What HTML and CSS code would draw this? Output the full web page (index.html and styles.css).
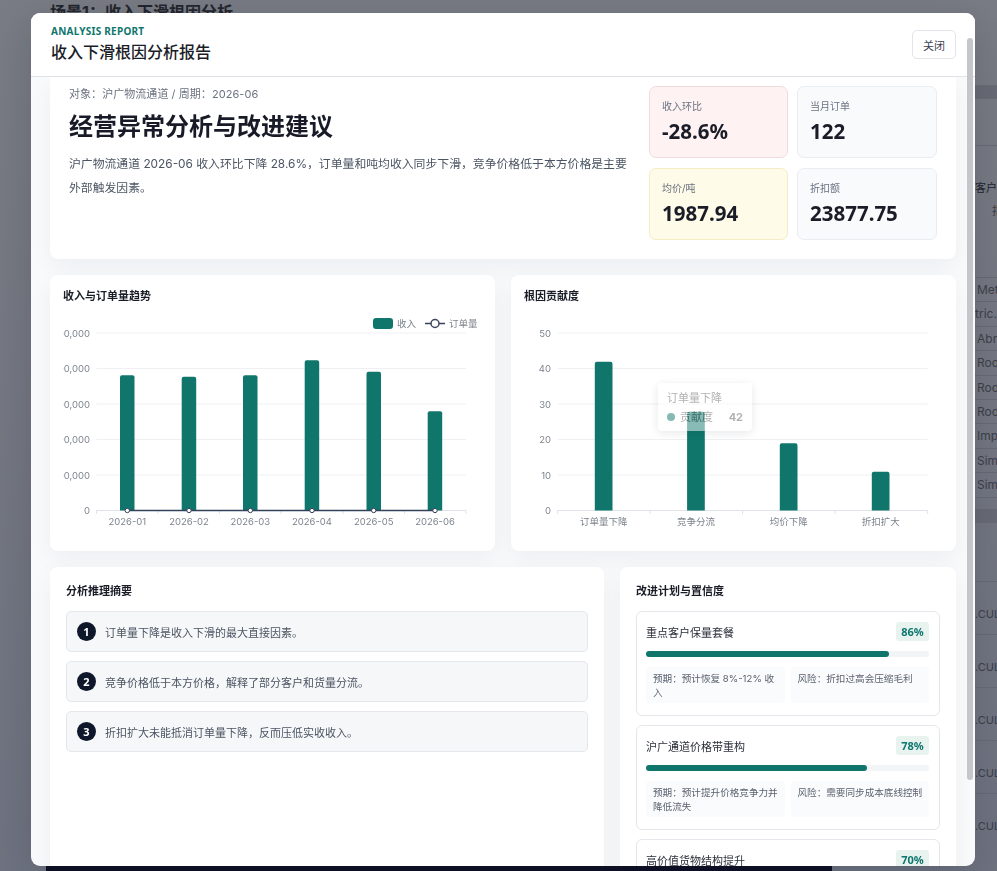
FILE: index.html
```html
<!DOCTYPE html>
<html lang="zh-CN">
<head>
    <meta charset="UTF-8">
    <meta name="viewport" content="width=device-width, initial-scale=1.0">
    <title>收入下滑根因分析报告</title>
    <link rel="stylesheet" href="styles.css">
</head>
<body>
    <!-- dimmed page behind the dialog -->
    <div class="page">
        <h1 class="page-title">场景1：收入下滑根因分析</h1>
        <div class="page-band"></div>
        <div class="page-line"></div>
        <div class="page-label">客户</div>
        <div class="page-tag">指</div>
        <div class="page-table">
            <div class="page-row">Metr</div>
            <div class="page-row cut">tric.S</div>
            <div class="page-row">Abno</div>
            <div class="page-row">Root</div>
            <div class="page-row">Root</div>
            <div class="page-row">Root</div>
            <div class="page-row">Impr</div>
            <div class="page-row">Simu</div>
            <div class="page-row">Simu</div>
        </div>
        <div class="page-band low"></div>
        <div class="page-calc">
            <div class="calc-row">.CUL</div>
            <div class="calc-row">.CUL</div>
            <div class="calc-row">.CUL</div>
            <div class="calc-row">.CUL</div>
            <div class="calc-row">.CUL</div>
        </div>
        <div class="page-footer"></div>
    </div>

    <div class="overlay">
        <div class="report">
            <div class="report-header">
                <div>
                    <div class="eyebrow">ANALYSIS REPORT</div>
                    <div class="report-title">收入下滑根因分析报告</div>
                </div>
                <button class="close-btn">关闭</button>
            </div>

            <div class="report-body">
                <section class="card hero">
                    <div class="hero-text">
                        <div class="hero-meta">对象：沪广物流通道 / 周期：2026-06</div>
                        <h2>经营异常分析与改进建议</h2>
                        <p>沪广物流通道 2026-06 收入环比下降 28.6%，订单量和吨均收入同步下滑，竞争价格低于本方价格是主要外部触发因素。</p>
                    </div>
                    <div class="stats">
                        <div class="stat danger">
                            <div class="stat-label">收入环比</div>
                            <div class="stat-value">-28.6%</div>
                        </div>
                        <div class="stat">
                            <div class="stat-label">当月订单</div>
                            <div class="stat-value">122</div>
                        </div>
                        <div class="stat warn">
                            <div class="stat-label">均价/吨</div>
                            <div class="stat-value">1987.94</div>
                        </div>
                        <div class="stat">
                            <div class="stat-label">折扣额</div>
                            <div class="stat-value">23877.75</div>
                        </div>
                    </div>
                </section>

                <div class="chart-row">
                    <section class="card chart-card">
                        <div class="chart-title">收入与订单量趋势</div>
                        <div class="chart">
                            <svg width="419" height="224" viewBox="0 0 419 224">
                                <g class="grid">
                                    <path d="M33.5 22H403M33.5 57.5H403M33.5 93H403M33.5 128.5H403M33.5 164H403"/>
                                </g>
                                <path class="axis" d="M33.5 199.5H403M33.5 199.5v3.5M95 199.5v3.5M156.5 199.5v3.5M218 199.5v3.5M280 199.5v3.5M341.5 199.5v3.5M403 199.5v3.5"/>
                                <g class="labels end">
                                    <text x="27" y="25.5">500,000</text>
                                    <text x="27" y="61">400,000</text>
                                    <text x="27" y="96.5">300,000</text>
                                    <text x="27" y="132">200,000</text>
                                    <text x="27" y="167.5">100,000</text>
                                    <text x="27" y="203">0</text>
                                </g>
                                <g class="bars">
                                    <path d="M57 199.5V66.3a2 2 0 0 1 2-2h10.5a2 2 0 0 1 2 2V199.5Z"/>
                                    <path d="M118.7 199.5V67.7a2 2 0 0 1 2-2h10.5a2 2 0 0 1 2 2V199.5Z"/>
                                    <path d="M180 199.5V66.3a2 2 0 0 1 2-2h10.5a2 2 0 0 1 2 2V199.5Z"/>
                                    <path d="M241.7 199.5V51.3a2 2 0 0 1 2-2h10.5a2 2 0 0 1 2 2V199.5Z"/>
                                    <path d="M303.5 199.5V62.7a2 2 0 0 1 2-2h10.5a2 2 0 0 1 2 2V199.5Z"/>
                                    <path d="M364.7 199.5V102.3a2 2 0 0 1 2-2h10.5a2 2 0 0 1 2 2V199.5Z"/>
                                </g>
                                <path class="line" d="M64.3 199.5H372"/>
                                <g class="dots">
                                    <circle cx="64.3" cy="199.5" r="2.2"/>
                                    <circle cx="126" cy="199.5" r="2.2"/>
                                    <circle cx="187.3" cy="199.5" r="2.2"/>
                                    <circle cx="249" cy="199.5" r="2.2"/>
                                    <circle cx="310.7" cy="199.5" r="2.2"/>
                                    <circle cx="372" cy="199.5" r="2.2"/>
                                </g>
                                <g class="labels middle">
                                    <text x="64.3" y="213.5">2026-01</text>
                                    <text x="126" y="213.5">2026-02</text>
                                    <text x="187.3" y="213.5">2026-03</text>
                                    <text x="249" y="213.5">2026-04</text>
                                    <text x="310.7" y="213.5">2026-05</text>
                                    <text x="372" y="213.5">2026-06</text>
                                </g>
                                <rect class="legend-bar" x="310" y="7" width="20" height="11" rx="3"/>
                                <text class="labels" x="334" y="16">收入</text>
                                <path class="line" d="M362 12.5H382"/>
                                <circle class="legend-dot" cx="372" cy="12.5" r="4"/>
                                <text class="labels" x="386" y="16">订单量</text>
                            </svg>
                        </div>
                    </section>

                    <section class="card chart-card">
                        <div class="chart-title">根因贡献度</div>
                        <div class="chart">
                            <svg width="419" height="224" viewBox="0 0 419 224">
                                <g class="grid">
                                    <path d="M33.7 22H403.7M33.7 57.5H403.7M33.7 93H403.7M33.7 128.5H403.7M33.7 164H403.7"/>
                                </g>
                                <path class="axis" d="M33.7 199.5H403.7M33.7 199.5v3.5M126 199.5v3.5M218.5 199.5v3.5M311 199.5v3.5M403.7 199.5v3.5"/>
                                <g class="labels end">
                                    <text x="27" y="25.5">50</text>
                                    <text x="27" y="61">40</text>
                                    <text x="27" y="96.5">30</text>
                                    <text x="27" y="132">20</text>
                                    <text x="27" y="167.5">10</text>
                                    <text x="27" y="203">0</text>
                                </g>
                                <g class="bars">
                                    <path d="M70.8 199.5V52.7a2 2 0 0 1 2-2h13.7a2 2 0 0 1 2 2V199.5Z"/>
                                    <path d="M163.1 199.5V102.7a2 2 0 0 1 2-2h13.7a2 2 0 0 1 2 2V199.5Z"/>
                                    <path d="M255.8 199.5V134.3a2 2 0 0 1 2-2h13.7a2 2 0 0 1 2 2V199.5Z"/>
                                    <path d="M347.8 199.5V162.7a2 2 0 0 1 2-2h13.7a2 2 0 0 1 2 2V199.5Z"/>
                                </g>
                                <g class="labels middle">
                                    <text x="79.7" y="213.5">订单量下降</text>
                                    <text x="172" y="213.5">竞争分流</text>
                                    <text x="264.7" y="213.5">均价下降</text>
                                    <text x="356.7" y="213.5">折扣扩大</text>
                                </g>
                            </svg>
                            <div class="tooltip">
                                <div class="tooltip-title">订单量下降</div>
                                <div class="tooltip-row">
                                    <span class="tooltip-dot"></span>
                                    <span>贡献度</span>
                                    <b>42</b>
                                </div>
                            </div>
                        </div>
                    </section>
                </div>

                <div class="detail-row">
                    <section class="card detail-card">
                        <div class="section-title">分析推理摘要</div>
                        <div class="reason-list">
                            <div class="reason"><span class="reason-no">1</span>订单量下降是收入下滑的最大直接因素。</div>
                            <div class="reason"><span class="reason-no">2</span>竞争价格低于本方价格，解释了部分客户和货量分流。</div>
                            <div class="reason"><span class="reason-no">3</span>折扣扩大未能抵消订单量下降，反而压低实收收入。</div>
                        </div>
                    </section>

                    <section class="card detail-card">
                        <div class="section-title">改进计划与置信度</div>
                        <div class="plan-list">
                            <div class="plan">
                                <div class="plan-head">
                                    <span>重点客户保量套餐</span>
                                    <span class="badge">86%</span>
                                </div>
                                <div class="progress"><div class="progress-fill" style="width: 86%"></div></div>
                                <div class="plan-notes">
                                    <div>预期：预计恢复 8%-12% 收入</div>
                                    <div>风险：折扣过高会压缩毛利</div>
                                </div>
                            </div>
                            <div class="plan">
                                <div class="plan-head">
                                    <span>沪广通道价格带重构</span>
                                    <span class="badge">78%</span>
                                </div>
                                <div class="progress"><div class="progress-fill" style="width: 78%"></div></div>
                                <div class="plan-notes">
                                    <div>预期：预计提升价格竞争力并降低流失</div>
                                    <div>风险：需要同步成本底线控制</div>
                                </div>
                            </div>
                            <div class="plan">
                                <div class="plan-head">
                                    <span>高价值货物结构提升</span>
                                    <span class="badge">70%</span>
                                </div>
                            </div>
                        </div>
                    </section>
                </div>
            </div>

            <div class="scroll-thumb"></div>
        </div>
    </div>
</body>
</html>
```

FILE: styles.css
```css
* {
    box-sizing: border-box;
}

html, body {
    height: 100%;
}

body {
    margin: 0;
    overflow: hidden;
    font-family: "Inter", "Noto Sans CJK SC", sans-serif;
    background: linear-gradient(180deg, #797c84, #6f7380);
    color: #1f2430;
}

/* dimmed page */
.page {
    height: 871px;
    overflow: hidden;
    color: #33353d;
    font-size: 11px;
}

.page-title {
    margin: 0;
    padding: 2px 0 0 50px;
    height: 22px;
    font-size: 16px;
    line-height: 20px;
    color: #24262d;
}

.page-band {
    height: 14px;
    margin: 63px 0 0 975px;
    background: #696c75;
}

.page-band.low {
    margin-top: 11px;
}

.page-line {
    height: 1px;
    margin: 46px 0 0 975px;
    background: #686b74;
}

.page-label {
    margin-top: 35px;
    padding-left: 975px;
    line-height: 14px;
    color: #23252b;
}

.page-tag {
    margin-top: 9px;
    padding-left: 992px;
    line-height: 14px;
    color: #3c3e45;
}

.page-table {
    margin: 59px 0 0 975px;
    border-top: 1px solid #686b74;
}

.page-row {
    height: 24.4px;
    line-height: 24px;
    padding-left: 2px;
    border-bottom: 1px solid #686b74;
    font-size: 12px;
    color: #3e4048;
}

.page-row.cut {
    padding-left: 0;
}

.page-calc {
    margin: 58px 0 0 975px;
}

.calc-row {
    height: 53px;
    padding-top: 22px;
    line-height: 20px;
    font-size: 11px;
    color: #3e4048;
    border-top: 1px solid #686b74;
}

.page-footer {
    position: fixed;
    left: 46px;
    bottom: 0;
    width: 786px;
    height: 5px;
    background: #0e1024;
}

/* dialog */
.overlay {
    position: fixed;
    inset: 0;
    padding: 13px 22px 5px 31px;
}

.report {
    position: relative;
    height: 100%;
    overflow: hidden;
    display: flex;
    flex-direction: column;
    border-radius: 9px;
    background: #f8fafc;
    box-shadow: 0 10px 40px rgba(15, 23, 42, 0.18);
}

.report-header {
    position: relative;
    z-index: 1;
    flex: none;
    height: 64px;
    display: flex;
    justify-content: space-between;
    align-items: flex-start;
    padding: 12px 19px 0 20px;
    background: #fff;
    border-bottom: 1px solid #dfe2e7;
}

.eyebrow {
    font-family: "Noto Sans", "Noto Sans CJK SC", sans-serif;
    font-size: 10px;
    font-weight: 700;
    line-height: 13px;
    letter-spacing: 0.25px;
    color: #0f766e;
}

.report-title {
    margin-top: 3px;
    font-size: 16px;
    font-weight: 500;
    line-height: 22px;
    color: #1a1d27;
}

.close-btn {
    width: 44px;
    height: 29px;
    margin-top: 5px;
    padding: 0;
    font-family: inherit;
    font-size: 11px;
    color: #374151;
    background: #fff;
    border: 1px solid #e2e5ea;
    border-radius: 5px;
}

.report-body {
    flex: 1;
    min-height: 0;
    overflow: hidden;
    padding: 0 19px;
}

.card {
    background: #fff;
    border-radius: 8px;
    box-shadow: 0 8px 24px rgba(15, 23, 42, 0.05);
}

.hero {
    display: flex;
    justify-content: space-between;
    height: 182px;
    padding: 9px 19px 19px 19px;
    border-radius: 0 0 8px 8px;
}

.hero-text {
    width: 560px;
}

.hero-meta {
    font-size: 11px;
    line-height: 16px;
    letter-spacing: 0.05px;
    color: #6b7280;
}

.hero h2 {
    margin: 9px 0 0;
    font-size: 24px;
    font-weight: 700;
    line-height: 32px;
    color: #181b27;
}

.hero p {
    margin: 9px 0 0;
    font-size: 11.85px;
    line-height: 24px;
    color: #4b5563;
}

.stats {
    display: grid;
    grid-template-columns: 139px 140px;
    grid-template-rows: 72px 72px;
    gap: 10px 9px;
}

.stat {
    padding: 13px 12px 0;
    background: #f8fafc;
    border: 1px solid #e9ecf0;
    border-radius: 7px;
}

.stat.danger {
    background: #fef3f2;
    border-color: #efdcdc;
}

.stat.warn {
    background: #fefce8;
    border-color: #f3ecc4;
}

.stat-label {
    font-size: 10px;
    line-height: 13px;
    color: #6b7280;
}

.stat-value {
    margin-top: 4px;
    font-family: "Noto Sans", sans-serif;
    font-size: 20.5px;
    font-weight: 700;
    line-height: 28px;
    color: #1a1d27;
}

.chart-row {
    display: grid;
    grid-template-columns: 445px 445px;
    gap: 16px;
    margin-top: 16px;
}

.chart-card {
    height: 276px;
    padding: 13px;
}

.chart-title {
    height: 23px;
    font-size: 11px;
    font-weight: 700;
    line-height: 16px;
    color: #1a1d27;
}

.chart {
    position: relative;
}

.chart svg {
    display: block;
}

.grid path {
    fill: none;
    stroke: #eef0f3;
    stroke-width: 1;
}

.axis {
    fill: none;
    stroke: #dfe2e7;
    stroke-width: 1;
}

.labels {
    font-size: 9.5px;
    fill: #7d838d;
}

.labels.end {
    text-anchor: end;
}

.labels.middle {
    text-anchor: middle;
}

.bars path, .legend-bar {
    fill: #10766b;
}

.line {
    fill: none;
    stroke: #33415c;
    stroke-width: 1.5;
}

.dots circle {
    fill: #fff;
    stroke: #33415c;
    stroke-width: 1;
}

.legend-dot {
    fill: #fff;
    stroke: #3d4658;
    stroke-width: 1.5;
}

.tooltip {
    position: absolute;
    left: 134px;
    top: 72px;
    width: 94px;
    height: 48px;
    padding: 7px 9px;
    background: #fff;
    border-radius: 4px;
    box-shadow: 0 2px 10px rgba(15, 23, 42, 0.2);
    opacity: 0.5;
    font-size: 11px;
    line-height: 16px;
    color: #666;
}

.tooltip-row {
    display: flex;
    align-items: center;
    margin-top: 3px;
}

.tooltip-dot {
    width: 8px;
    height: 8px;
    margin-right: 5px;
    border-radius: 50%;
    background: #10766b;
}

.tooltip-row b {
    margin-left: auto;
}

.detail-row {
    display: grid;
    grid-template-columns: 554px 336px;
    gap: 16px;
    margin-top: 16px;
}

.detail-card {
    height: 400px;
    padding: 16px;
}

.section-title {
    height: 28px;
    font-size: 11px;
    font-weight: 700;
    line-height: 16px;
    color: #1a1d27;
}

.reason-list {
    display: flex;
    flex-direction: column;
    gap: 9px;
}

.reason {
    display: flex;
    align-items: center;
    gap: 9px;
    height: 41px;
    padding: 0 10px;
    font-size: 11px;
    color: #4b5563;
    background: #f6f7f9;
    border: 1px solid #e4e7eb;
    border-radius: 5px;
}

.reason-no {
    flex: none;
    width: 19px;
    height: 19px;
    font-family: "Noto Sans", sans-serif;
    font-size: 11px;
    font-weight: 700;
    line-height: 19px;
    text-align: center;
    color: #fff;
    background: #0f172a;
    border-radius: 50%;
}

.plan-list {
    display: flex;
    flex-direction: column;
    gap: 9.5px;
}

.plan {
    height: 104.5px;
    padding: 10px 10px 0 9px;
    border: 1px solid #e4e7eb;
    border-radius: 6px;
}

.plan-head {
    display: flex;
    justify-content: space-between;
    align-items: center;
    height: 19px;
    font-size: 11px;
    color: #2b2f3a;
}

.badge {
    width: 33px;
    height: 19px;
    font-family: "Noto Sans", sans-serif;
    font-size: 11px;
    font-weight: 700;
    line-height: 19px;
    text-align: center;
    color: #0f766e;
    background: #e8f3f0;
    border-radius: 3px;
}

.progress {
    height: 6px;
    margin-top: 10px;
    background: #f3f4f6;
    border-radius: 999px;
}

.progress-fill {
    height: 100%;
    background: #10766b;
    border-radius: 999px;
}

.plan-notes {
    display: grid;
    grid-template-columns: 1fr 1fr;
    gap: 6px;
    margin-top: 10px;
    font-size: 9.6px;
    line-height: 14px;
    color: #5b6270;
}

.plan-notes div {
    min-height: 36px;
    padding: 5px 6px 3px 7px;
    background: #fafbfc;
    border-radius: 4px;
}

.scroll-thumb {
    position: absolute;
    z-index: 2;
    top: 25px;
    right: 2px;
    width: 6px;
    height: 742px;
    background: #c4c6c9;
    border-radius: 3px;
}
```
